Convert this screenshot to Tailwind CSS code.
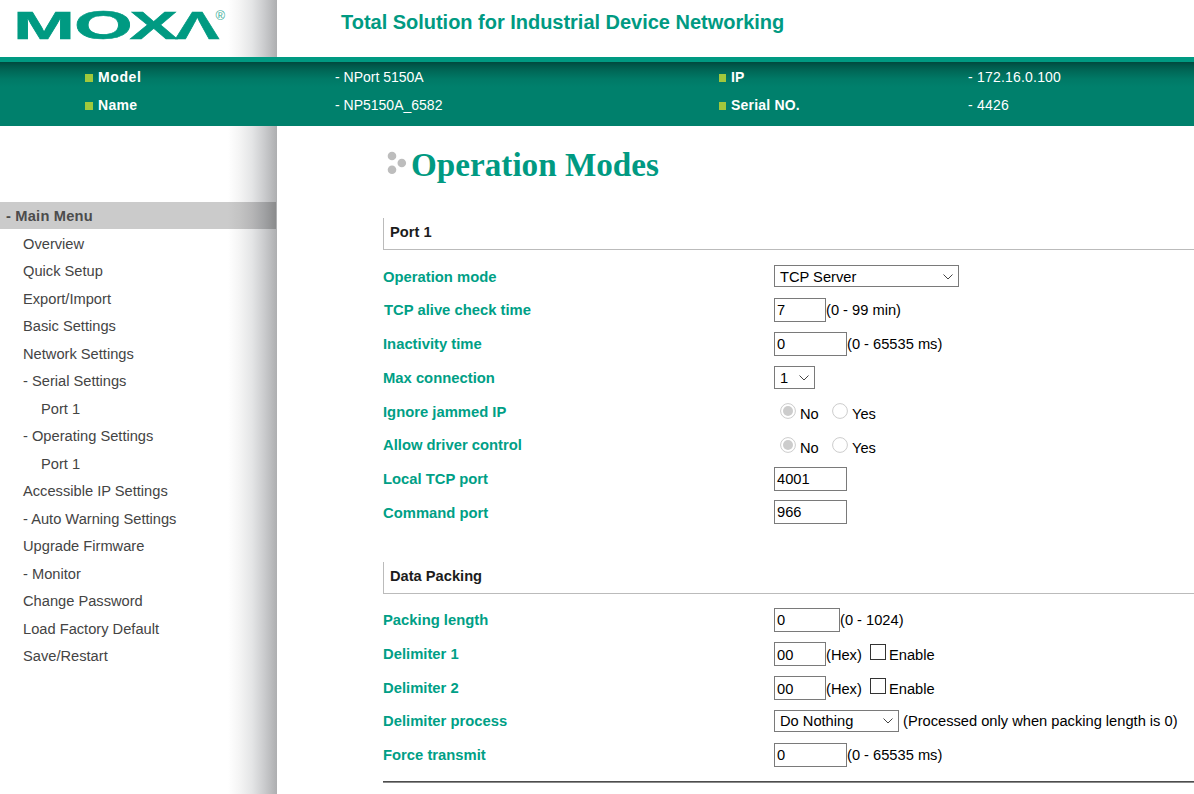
<!DOCTYPE html>
<html lang="en">
<head>
<meta charset="utf-8">
<title>Operation Modes</title>
<script src="https://cdn.jsdelivr.net/npm/@tailwindcss/browser@4"></script>
</head>
<body class="w-[1194px] h-[794px] overflow-hidden bg-white flex flex-col font-['Liberation_Sans',Arial,sans-serif] text-[14.67px] leading-[20px] text-black whitespace-nowrap">

<header class="flex h-[57px] shrink-0">
  <div class="w-[277px] bg-[linear-gradient(to_right,#fff_228px,#f4f4f4_240px,#e4e5e6_252px,#cbccce_264px,#adaeb0_277px)]">
    <svg class="block" width="277" height="57" viewBox="0 0 277 57" fill="#009a82" font-family="Liberation Sans" font-weight="700" font-size="39.5">
      <g stroke="#009a82" stroke-width=".5">
        <text x="13" y="38.7" textLength="62" lengthAdjust="spacingAndGlyphs">M</text>
        <text x="73.9" y="38.9" font-size="40.5" textLength="58.8" lengthAdjust="spacingAndGlyphs">O</text>
        <text x="129.4" y="38.7" textLength="48.4" lengthAdjust="spacingAndGlyphs">X</text>
        <text x="175" y="38.7" textLength="44.5" lengthAdjust="spacingAndGlyphs">Λ</text>
      </g>
      <text x="215.500" y="19.500" font-size="13" font-weight="400" opacity=".8">®</text>
    </svg>
  </div>
  <div class="pl-[64px] pt-[12px] text-[20px] font-bold text-[#009a82] tracking-[-0.02px]">Total Solution for Industrial Device Networking</div>
</header>

<section class="h-[69px] shrink-0 border-t-[5px] border-[#009a82] bg-[linear-gradient(to_bottom,#00493e_0px,#00594c_4px,#006857_9px,#007966_17px,#00806c_25px)] text-white text-[14px] leading-[28px] pt-[1px]">
  <div class="flex items-center h-[28px]">
    <div class="w-[335px] pl-[85px] flex items-center gap-[5px] font-bold tracking-[0.6px]"><i class="size-2 bg-[#a0c83c] mt-[2px]"></i>Model</div>
    <div class="w-[384px]">- NPort 5150A</div>
    <div class="w-[249px] flex items-center gap-[5px] font-bold"><i class="w-[7px] h-2 bg-[#a0c83c] mt-[2px]"></i>IP</div>
    <div class="tracking-[0.2px]">- 172.16.0.100</div>
  </div>
  <div class="flex items-center h-[28px]">
    <div class="w-[335px] pl-[85px] flex items-center gap-[5px] font-bold tracking-[0.3px]"><i class="size-2 bg-[#a0c83c] mt-[2px]"></i>Name</div>
    <div class="w-[384px]">- NP5150A_6582</div>
    <div class="w-[249px] flex items-center gap-[5px] font-bold tracking-[0.2px]"><i class="w-[7px] h-2 bg-[#a0c83c] mt-[2px]"></i>Serial NO.</div>
    <div class="tracking-[0.2px]">- 4426</div>
  </div>
</section>

<div class="flex grow">
  <nav class="w-[277px] shrink-0 pt-[76px] text-[#444] leading-[27.5px] bg-[linear-gradient(to_right,#fff_228px,#f4f4f4_240px,#e4e5e6_252px,#cbccce_264px,#adaeb0_277px)]">
    <div class="w-[276px] h-[27px] mb-[1.6px] pl-[6px] font-bold text-[#4c4c4c] leading-[28px] tracking-[0.2px] bg-[linear-gradient(to_right,#cbcbcb_228px,#c3c3c3_240px,#b6b6b7_252px,#a1a2a4_264px,#8a8b8c_276px)]">- Main Menu</div>
    <ul class="pl-[23px]">
      <li>Overview</li>
      <li>Quick Setup</li>
      <li>Export/Import</li>
      <li>Basic Settings</li>
      <li>Network Settings</li>
      <li>- Serial Settings</li>
      <li class="pl-[18px]">Port 1</li>
      <li>- Operating Settings</li>
      <li class="pl-[18px]">Port 1</li>
      <li>Accessible IP Settings</li>
      <li>- Auto Warning Settings</li>
      <li>Upgrade Firmware</li>
      <li>- Monitor</li>
      <li>Change Password</li>
      <li>Load Factory Default</li>
      <li>Save/Restart</li>
    </ul>
  </nav>

  <main class="pl-[106px] grow flex flex-col">
    <h1 class="mt-[19px] h-[40px] flex items-center pl-[4px] gap-[4px] font-['Liberation_Serif',serif] font-bold text-[33.2px] text-[#009a82]">
      <svg class="mb-[6px]" width="20" height="26" viewBox="0 0 20 26" fill="#bdbdbd"><circle cx="5" cy="7" r="4.3"/><circle cx="14.800" cy="14" r="4.3"/><circle cx="5" cy="20.800" r="4.3"/></svg>Operation Modes</h1>

    <h2 class="mt-[33px] h-[32px] shrink-0 border-l border-b border-[#bbb] pl-[6px] pt-[4px] font-bold text-[#1c1c1c]">Port 1</h2>
    <div class="mt-[9.3px] [&>div]:flex [&>div]:items-center [&>div]:h-[33.75px] [&>div>b]:w-[391px] [&>div>b]:pt-px [&>div>b]:text-[#009f86] [&>div>b]:text-[14.8px]">
      <div><b>Operation mode</b>
        <span class="w-[185px] h-[22px] border border-[#7a7a7a] pt-px pl-[5px] pr-[5px] flex items-center justify-between">TCP Server<svg width="10" height="6" viewBox="0 0 10 6" fill="none" stroke="#444"><path d="M.5.5 5 5 9.500.5"/></svg></span></div>
      <div><b class="pl-px">TCP alive check time</b>
        <span class="w-[52px] h-[24px] border border-[#7a7a7a] pl-[2px] leading-[22px]">7</span>(0 - 99 min)</div>
      <div><b>Inactivity time</b>
        <span class="w-[73px] h-[24px] border border-[#7a7a7a] pl-[2px] leading-[22px]">0</span>(0 - 65535 ms)</div>
      <div><b>Max connection</b>
        <span class="w-[41px] h-[23px] border border-[#7a7a7a] pt-px pl-[5px] pr-[5px] flex items-center justify-between">1<svg width="10" height="6" viewBox="0 0 10 6" fill="none" stroke="#444"><path d="M.5.5 5 5 9.500.5"/></svg></span></div>
      <div><b>Ignore jammed IP</b>
        <svg class="ml-[6px]" width="16" height="16" viewBox="0 0 16 16"><circle cx="8" cy="8" r="7.4" fill="#fff" stroke="#ccc"/><circle cx="8" cy="8" r="5" fill="#ccc"/></svg><span class="w-[32px] ml-[4px] mt-[5px]">No</span><svg width="16" height="16" viewBox="0 0 16 16"><circle cx="8" cy="8" r="7.4" fill="#fff" stroke="#ccc"/></svg><span class="ml-[4px] mt-[5px]">Yes</span></div>
      <div><b>Allow driver control</b>
        <svg class="ml-[6px]" width="16" height="16" viewBox="0 0 16 16"><circle cx="8" cy="8" r="7.4" fill="#fff" stroke="#ccc"/><circle cx="8" cy="8" r="5" fill="#ccc"/></svg><span class="w-[32px] ml-[4px] mt-[6px]">No</span><svg width="16" height="16" viewBox="0 0 16 16"><circle cx="8" cy="8" r="7.4" fill="#fff" stroke="#ccc"/></svg><span class="ml-[4px] mt-[6px]">Yes</span></div>
      <div><b>Local TCP port</b>
        <span class="w-[73px] h-[24px] border border-[#7a7a7a] pl-[2px] leading-[22px]">4001</span></div>
      <div><b>Command port</b>
        <span class="w-[73px] h-[24px] border border-[#7a7a7a] pl-[2px] leading-[23px]">966</span></div>
    </div>

    <h2 class="mt-[32.7px] h-[32px] shrink-0 border-l border-b border-[#bbb] pl-[6px] pt-[4px] font-bold text-[#1c1c1c]">Data Packing</h2>
    <div class="mt-[9.3px] [&>div]:flex [&>div]:items-center [&>div]:h-[33.75px] [&>div>b]:w-[391px] [&>div>b]:text-[#009f86] [&>div>b]:text-[14.8px]">
      <div><b>Packing length</b>
        <span class="w-[66px] h-[24px] border border-[#7a7a7a] pl-[2px] leading-[22px]">0</span>(0 - 1024)</div>
      <div><b>Delimiter 1</b>
        <span class="w-[52px] h-[24px] border border-[#7a7a7a] pl-[2px] leading-[24px]">00</span><span class="w-[44px] mt-[2px]">(Hex)</span><i class="size-4 border border-[#333] mb-[4px]"></i><span class="ml-[3px] mt-[2px]">Enable</span></div>
      <div><b>Delimiter 2</b>
        <span class="w-[52px] h-[24px] border border-[#7a7a7a] pl-[2px] leading-[24px]">00</span><span class="w-[44px] mt-[2px]">(Hex)</span><i class="size-4 border border-[#333] mb-[4px]"></i><span class="ml-[3px] mt-[2px]">Enable</span></div>
      <div><b>Delimiter process</b>
        <span class="w-[125px] h-[22px] border border-[#7a7a7a] pl-[5px] pr-[5px] flex items-center justify-between">Do Nothing<svg width="10" height="6" viewBox="0 0 10 6" fill="none" stroke="#444"><path d="M.5.5 5 5 9.500.5"/></svg></span><span class="ml-[4px]">(Processed only when packing length is 0)</span></div>
      <div><b>Force transmit</b>
        <span class="w-[73px] h-[24px] border border-[#7a7a7a] pl-[2px] leading-[22px]">0</span>(0 - 65535 ms)</div>
    </div>
    <div class="mt-[8.7px] h-[2px] shrink-0 border-t border-[#4d4d4d] bg-[#8a8a8a]"></div>
  </main>
</div>
</body>
</html>
